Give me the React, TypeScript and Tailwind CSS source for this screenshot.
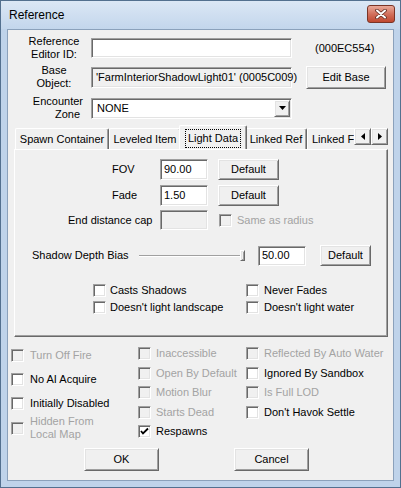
import React from 'react';

const sunken =
  'border border-t-[#a0a0a0] border-l-[#a0a0a0] border-r-white border-b-white shadow-[inset_1px_1px_0_#696969,inset_-1px_-1px_0_#e3e3e3]';
const raised =
  'border border-t-white border-l-white border-r-[#696969] border-b-[#696969] shadow-[inset_1px_1px_0_#e3e3e3,inset_-1px_-1px_0_#a0a0a0] bg-[#f0f0f0]';

const Button: React.FC<{ label: string; className: string }> = ({ label, className }) => (
  <div className={`${raised} flex shrink-0 items-center justify-center ${className}`}>{label}</div>
);

interface CheckProps {
  label: React.ReactNode;
  checked?: boolean;
  disabled?: boolean;
  gap?: string;
  className?: string;
}

const Check: React.FC<CheckProps> = ({ label, checked, disabled, gap = 'ml-[5px]', className = '' }) => (
  <div className={`flex items-center ${className}`}>
    <div
      className={`${sunken} flex h-[13px] w-[13px] shrink-0 items-center justify-center ${
        disabled ? 'bg-[#f0f0f0]' : 'bg-white'
      }`}
    >
      {checked && (
        <svg width="9" height="9" viewBox="0 0 9 9">
          <path d="M1 4 L3 6.5 L8 1.5" stroke="#000" strokeWidth="1.8" fill="none" />
        </svg>
      )}
    </div>
    <span className={`${gap} ${disabled ? 'text-[#a3a3a3]' : 'text-black'}`}>{label}</span>
  </div>
);

const Tab: React.FC<{ label: string; w: string; align?: string }> = ({ label, w, align = 'justify-center' }) => (
  <div
    className={`${w} h-[21px] shrink-0 rounded-t-[2px] border-l border-t border-r border-l-white border-t-white border-r-[#696969] shadow-[inset_-1px_0_0_#a0a0a0] flex items-center ${align} whitespace-nowrap`}
  >
    {label}
  </div>
);

const Arrow: React.FC<{ dir: 'left' | 'right' }> = ({ dir }) => (
  <div className={`${raised} flex h-[17px] w-[17px] items-center justify-center`}>
    <svg width="4" height="7" viewBox="0 0 4 7">
      {dir === 'left' ? <path d="M4 0 L0 3.5 L4 7 Z" fill="#000" /> : <path d="M0 0 L4 3.5 L0 7 Z" fill="#000" />}
    </svg>
  </div>
);

export default function App() {
  return (
    <div
      className="flex h-[488px] w-[401px] flex-col border border-[#53708f] bg-[#bfd3ea] px-[6px] pb-[6px] text-[11px] leading-[13px] text-black"
      style={{ fontFamily: '"Liberation Sans", Arial, sans-serif' }}
    >
      {/* title bar */}
      <div className="-mx-[6px] flex h-[28px] shrink-0 items-start justify-between bg-gradient-to-b from-[#dbe7f5] to-[#c3d6ec] px-[6px]">
        <span className="mt-[8px] pl-[2px] text-[12px]">Reference</span>
        <div className="-mr-[1px] mt-[4px] flex h-[18px] w-[28px] items-center justify-center rounded-[3px] border border-[#7a3426] bg-gradient-to-b from-[#e9a99a] via-[#d2705c] to-[#c0472f]">
          <svg width="12" height="10" viewBox="0 0 12 10">
            <path d="M2 1.5 L10 8.5 M10 1.5 L2 8.5" stroke="#5e2a20" strokeWidth="3.6" strokeLinecap="round" />
            <path d="M2 1.5 L10 8.5 M10 1.5 L2 8.5" stroke="#fff" strokeWidth="2" strokeLinecap="round" />
          </svg>
        </div>
      </div>

      {/* client area */}
      <div className="flex flex-1 flex-col border border-[#8ba1bb] bg-[#f0f0f0]">
        {/* Reference Editor ID */}
        <div className="mt-[5px] flex h-[26px] items-center">
          <div className="ml-[12px] w-[68px] text-center">
            Reference
            <br />
            Editor ID:
          </div>
          <div className={`${sunken} ml-[3px] h-[20px] w-[201px] bg-white`} />
          <span className="ml-[23px]">(000EC554)</span>
        </div>

        {/* Base Object */}
        <div className="mt-[3px] flex h-[26px] items-center">
          <div className="ml-[12px] w-[68px] text-center">
            Base
            <br />
            Object:
          </div>
          <div className={`${sunken} ml-[3px] flex h-[21px] w-[201px] items-center bg-[#f0f0f0] pl-[4px] whitespace-nowrap`}>
            'FarmInteriorShadowLight01' (0005C009)
          </div>
          <Button label="Edit Base" className="ml-[14px] h-[23px] w-[80px]" />
        </div>

        {/* Encounter Zone */}
        <div className="mt-[5px] flex h-[26px] items-center">
          <div className="ml-[12px] w-[68px] text-right">
            <div className="pr-[5px]">Encounter</div>
            <div className="pr-[8px]">Zone</div>
          </div>
          <div className={`${sunken} ml-[3px] flex h-[21px] w-[201px] items-center justify-between bg-white pl-[5px] pr-[1px]`}>
            <span>NONE</span>
            <div className={`${raised} flex h-[17px] w-[16px] items-center justify-center`}>
              <svg width="7" height="4" viewBox="0 0 7 4">
                <path d="M0 0 L7 0 L3.5 4 Z" fill="#000" />
              </svg>
            </div>
          </div>
        </div>

        {/* tabs */}
        <div className="mt-[4px] flex h-[24px] items-end">
          <div className="ml-[7px] flex h-[24px] w-[339px] items-end overflow-hidden">
            <Tab label="Spawn Container" w="w-[94px]" />
            <Tab label="Leveled Item" w="w-[72px]" />
            <div className="relative z-10 -mx-[2px] -mb-px flex h-[25px] w-[68px] shrink-0 items-center justify-center rounded-t-[2px] border-l border-t border-r border-l-white border-t-white border-r-[#696969] bg-[#f0f0f0] shadow-[inset_-1px_0_0_#a0a0a0]">
              <span className="border border-dotted border-black px-[2px] py-[2px]">Light Data</span>
            </div>
            <Tab label="Linked Ref" w="w-[62px]" />
            <Tab label="Linked F" w="w-[60px]" align="justify-start pl-[4px]" />
          </div>
          <div className="mb-[4px] flex">
            <Arrow dir="left" />
            <Arrow dir="right" />
          </div>
        </div>

        {/* tab panel */}
        <div className="ml-[6px] flex h-[188px] w-[374px] flex-col border border-t-white border-l-white border-r-[#696969] border-b-[#696969] shadow-[inset_-1px_-1px_0_#a0a0a0]">
          <div className="mt-[9px] flex h-[21px] items-center">
            <span className="ml-[97px] w-[48px]">FOV</span>
            <div className={`${sunken} flex h-[21px] w-[48px] items-center bg-white pl-[3px]`}>90.00</div>
            <Button label="Default" className="ml-[10px] h-[21px] w-[61px]" />
          </div>
          <div className="mt-[5px] flex h-[21px] items-center">
            <span className="ml-[97px] w-[48px]">Fade</span>
            <div className={`${sunken} flex h-[21px] w-[48px] items-center bg-white pl-[3px]`}>1.50</div>
            <Button label="Default" className="ml-[10px] h-[21px] w-[61px]" />
          </div>
          <div className="mt-[4px] flex h-[20px] items-center">
            <span className="ml-[53px] w-[92px]">End distance cap</span>
            <div className={`${sunken} h-[20px] w-[48px] bg-[#f0f0f0]`} />
            <Check label="Same as radius" disabled className="ml-[11px]" />
          </div>
          <div className="mt-[15px] flex h-[21px] items-center">
            <span className="ml-[17px] w-[107px]">Shadow Depth Bias</span>
            <div className="flex h-[21px] w-[106px] items-center">
              <div className="h-[2px] flex-1 border-t border-b border-t-[#a0a0a0] border-b-white" />
              <div className={`${raised} h-[11px] w-[5px]`} />
            </div>
            <div className={`${sunken} ml-[13px] flex h-[20px] w-[48px] items-center bg-white pl-[3px]`}>50.00</div>
            <Button label="Default" className="ml-[14px] h-[21px] w-[51px]" />
          </div>
          <div className="mt-[17px] flex h-[15px] items-center">
            <Check label="Casts Shadows" gap="ml-[4px]" className="ml-[78px] w-[153px]" />
            <Check label="Never Fades" />
          </div>
          <div className="mt-[2px] flex h-[15px] items-center">
            <Check label="Doesn't light landscape" gap="ml-[4px]" className="ml-[78px] w-[153px]" />
            <Check label="Doesn't light water" />
          </div>
        </div>

        {/* flags */}
        <div className="mt-[6px] flex">
          <div className="ml-[3px] flex w-[127px] flex-col">
            <Check label="Turn Off Fire" disabled gap="ml-[6px]" className="h-[24px]" />
            <Check label="No AI Acquire" gap="ml-[6px]" className="h-[24px]" />
            <Check label="Initially Disabled" gap="ml-[6px]" className="h-[24px]" />
            <Check
              label={
                <>
                  Hidden From
                  <br />
                  Local Map
                </>
              }
              disabled
              gap="ml-[6px]"
              className="h-[26px]"
            />
          </div>
          <div className="mt-[1px] flex w-[108px] flex-col">
            <Check label="Inaccessible" disabled className="h-[19.5px]" />
            <Check label="Open By Default" disabled className="h-[19.5px]" />
            <Check label="Motion Blur" disabled className="h-[19.5px]" />
            <Check label="Starts Dead" disabled className="h-[19.5px]" />
            <Check label="Respawns" checked className="h-[19.5px]" />
          </div>
          <div className="mt-[1px] flex flex-col">
            <Check label="Reflected By Auto Water" disabled className="h-[19.5px]" />
            <Check label="Ignored By Sandbox" className="h-[19.5px]" />
            <Check label="Is Full LOD" disabled className="h-[19.5px]" />
            <Check label="Don't Havok Settle" className="h-[19.5px]" />
          </div>
        </div>

        <div className="mt-[6px] flex">
          <Button label="OK" className="ml-[76px] h-[23px] w-[75px]" />
          <Button label="Cancel" className="ml-[75px] h-[23px] w-[75px]" />
        </div>
      </div>
    </div>
  );
}
